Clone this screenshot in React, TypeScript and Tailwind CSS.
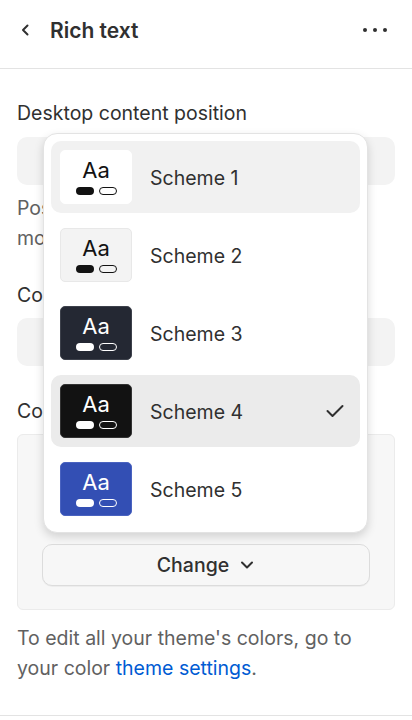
import React from "react";

type Scheme = {
  name: string;
  bg: string;
  text: string;
  pill: string;
  outline: string;
  border: string;
  row: string;
  checked?: boolean;
};

const schemes: Scheme[] = [
  { name: "Scheme 1", bg: "bg-white", text: "text-[#121212]", pill: "bg-[#121212]", outline: "border-[#121212]", border: "border-white", row: "bg-[#f1f1f1]" },
  { name: "Scheme 2", bg: "bg-[#f3f3f3]", text: "text-[#121212]", pill: "bg-[#121212]", outline: "border-[#121212]", border: "border-[#e8e8e8]", row: "" },
  { name: "Scheme 3", bg: "bg-[#242833]", text: "text-white", pill: "bg-white", outline: "border-white", border: "border-[#3d414b]", row: "" },
  { name: "Scheme 4", bg: "bg-[#121212]", text: "text-white", pill: "bg-white", outline: "border-white", border: "border-[#333333]", row: "bg-[#ebebeb]", checked: true },
  { name: "Scheme 5", bg: "bg-[#334fb4]", text: "text-white", pill: "bg-white", outline: "border-white", border: "border-[#4a63c0]", row: "" },
];

function Swatch({ s }: { s: Scheme }) {
  return (
    <div className={`w-[72px] h-[54px] rounded-[5px] border ${s.bg} ${s.border} flex flex-col items-center justify-center shrink-0`}>
      <div className={`text-[22px] leading-[22px] font-normal ${s.text}`}>Aa</div>
      <div className="flex gap-[5px] mt-[6px]">
        <div className={`w-[18px] h-[8px] rounded-full ${s.pill}`} />
        <div className={`w-[18px] h-[8px] rounded-full border-[1.5px] ${s.outline}`} />
      </div>
    </div>
  );
}

export default function App() {
  return (
    <div
      className="relative w-[412px] h-[720px] bg-white overflow-hidden text-[#303030]"
      style={{ fontFamily: "Inter, 'Noto Sans', sans-serif" }}
    >
      {/* Header */}
      <div className="h-[69px] border-b border-[#e3e3e3] flex items-center px-[17px] pb-[8px]">
        <svg width="14" height="14" viewBox="0 0 14 14" className="ml-[1px] mr-[18px]">
          <path d="M9.5 2.5 L5 7 L9.5 11.5" fill="none" stroke="#303030" strokeWidth="2" strokeLinecap="round" strokeLinejoin="round" />
        </svg>
        <div className="text-[21px] font-semibold text-[#303030] leading-none">Rich text</div>
        <div className="ml-auto mr-[8px] flex gap-[6px]">
          <div className="w-[4px] h-[4px] rounded-full bg-[#303030]" />
          <div className="w-[4px] h-[4px] rounded-full bg-[#303030]" />
          <div className="w-[4px] h-[4px] rounded-full bg-[#303030]" />
        </div>
      </div>

      {/* Content */}
      <div className="px-[17px] pt-[29px] text-[19.5px] leading-[30px]">
        <div>Desktop content position</div>
        <div className="mt-[9px] h-[48px] rounded-[10px] bg-[#f3f3f3]" />
        <div className="mt-[8px] text-[#616161]">
          Position is optimized for
          <br />
          mobile.
        </div>

        <div className="mt-[27px]">Content alignment</div>
        <div className="mt-[8px] h-[48px] rounded-[10px] bg-[#f3f3f3]" />

        <div className="mt-[30px]">Color scheme</div>
        <div className="mt-[8px] rounded-[6px] border border-[#ebebeb] bg-[#f7f7f7] px-[24px] pt-[24px] pb-[23px]">
          <div className="h-[85px]" />
          <button className="w-full h-[42px] rounded-[10px] border border-[#dcdcdc] bg-[#f7f7f7] shadow-[0_1px_0_rgba(0,0,0,0.04)] flex items-center justify-center gap-[10px] text-[19.5px] font-medium text-[#303030]">
            Change
            <svg width="16" height="16" viewBox="0 0 16 16">
              <path d="M3 5.5 L8 10.5 L13 5.5" fill="none" stroke="#303030" strokeWidth="2" strokeLinecap="round" strokeLinejoin="round" />
            </svg>
          </button>
        </div>

        <div className="mt-[13px] text-[#616161]">
          To edit all your theme's colors, go to
          <br />
          your color <span className="text-[#005bd3]">theme settings</span>.
        </div>
      </div>

      <div className="absolute left-0 right-0 top-[715px] border-t border-[#e3e3e3]" />

      {/* Popover */}
      <div className="absolute left-[43px] top-[133px] w-[325px] h-[400px] rounded-[14px] bg-white border border-[#e3e3e3] shadow-[0_4px_10px_rgba(0,0,0,0.15)] p-[7px] flex flex-col gap-[6px]">
        {schemes.map((s) => (
          <div key={s.name} className={`h-[72px] rounded-[10px] flex items-center pl-[9px] pr-[16px] ${s.row}`}>
            <Swatch s={s} />
            <div className="ml-[18px] pt-[3px] text-[19.5px] text-[#303030]">{s.name}</div>
            {s.checked && (
              <svg width="18" height="14" viewBox="0 0 18 14" className="ml-auto">
                <path d="M1.5 7 L6.5 12 L16.5 2" fill="none" stroke="#303030" strokeWidth="2" strokeLinecap="round" strokeLinejoin="round" />
              </svg>
            )}
          </div>
        ))}
      </div>
    </div>
  );
}
